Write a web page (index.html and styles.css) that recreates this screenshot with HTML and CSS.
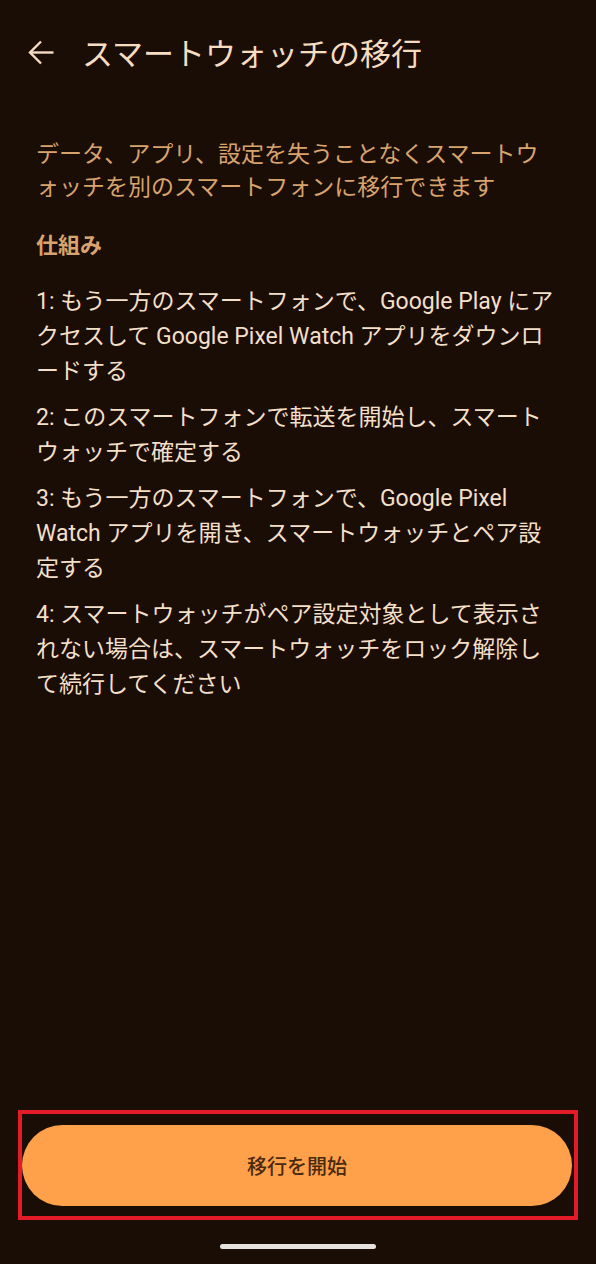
FILE: index.html
```html
<!DOCTYPE html>
<html lang="ja">
<head>
<meta charset="utf-8">
<title>スマートウォッチの移行</title>
<link rel="stylesheet" href="styles.css">
</head>
<body>
<div class="page">
  <header class="topbar">
    <span class="back">
      <svg width="26" height="26" viewBox="0 0 26 26" aria-hidden="true">
        <path d="M2.5 12.5H25.5" stroke="#f6dcc0" stroke-width="2.4" fill="none"/>
        <path d="M13 1.5L2 12.5L13 23.5" stroke="#f6dcc0" stroke-width="2.4" fill="none"/>
      </svg>
    </span>
    <h1 class="title">スマートウォッチの移行</h1>
  </header>
  <main class="content">
    <p class="desc">データ、アプリ、設定を失うことなくスマートウ<br>ォッチを別のスマートフォンに移行できます</p>
    <h2 class="heading">仕組み</h2>
    <ol class="steps">
      <li>1: もう一方のスマートフォンで、Google Play にア<br>クセスして Google Pixel Watch アプリをダウンロ<br>ードする</li>
      <li>2: このスマートフォンで転送を開始し、スマート<br>ウォッチで確定する</li>
      <li>3: もう一方のスマートフォンで、Google Pixel<br>Watch アプリを開き、スマートウォッチとペア設<br>定する</li>
      <li>4: スマートウォッチがペア設定対象として表示さ<br>れない場合は、スマートウォッチをロック解除し<br>て続行してください</li>
    </ol>
  </main>
  <footer class="footer">
    <div class="frame">
      <button class="start">移行を開始</button>
    </div>
    <div class="nav"><span class="handle"></span></div>
  </footer>
</div>
</body>
</html>
```

FILE: styles.css
```css
* { box-sizing: border-box; }
html, body {
  margin: 0;
  padding: 0;
  background: #190d05;
}
body {
  font-family: Roboto, "Noto Sans CJK JP", sans-serif;
}
.page {
  width: 596px;
  height: 1264px;
  display: flex;
  flex-direction: column;
  overflow: hidden;
}
.topbar {
  height: 104px;
  display: flex;
  align-items: center;
  padding-left: 28px;
}
.back {
  width: 26px;
  height: 26px;
  display: flex;
  margin-right: 28px;
  margin-top: 1px;
}
.title {
  margin: 0;
  font-family: "Noto Sans CJK JP", sans-serif;
  font-weight: 400;
  font-size: 31px;
  line-height: 40px;
  color: #f6dcc0;
  white-space: nowrap;
}
.content {
  flex: 1;
  padding: 32px 10px 0 36px;
}
.desc {
  margin: 0;
  font-family: "Noto Sans CJK JP", sans-serif;
  font-size: 23px;
  line-height: 33px;
  color: #d9a36d;
  white-space: nowrap;
}
.heading {
  margin: 25px 0 0;
  font-family: "Noto Sans CJK JP", sans-serif;
  font-weight: 700;
  font-size: 22px;
  line-height: 33px;
  color: #d9a36d;
}
.steps {
  list-style: none;
  margin: 24px 0 0;
  padding: 0;
  display: flex;
  flex-direction: column;
  gap: 11px;
}
.steps li {
  font-size: 23px;
  line-height: 35px;
  color: #f4dfc8;
  white-space: nowrap;
}
.footer {
  display: flex;
  flex-direction: column;
}
.frame {
  margin: 0 18px;
  border: 4px solid #e31b26;
  padding: 11px 2px 10px 0;
}
.start {
  display: block;
  width: 100%;
  height: 81px;
  border: none;
  border-radius: 41px;
  background: #ffa04b;
  color: #4a2a0e;
  font-family: "Noto Sans CJK JP", sans-serif;
  font-size: 20px;
  font-weight: 500;
  padding: 0;
}
.nav {
  height: 44px;
  padding-top: 24px;
  display: flex;
  justify-content: center;
}
.handle {
  width: 156px;
  height: 5px;
  border-radius: 3px;
  background: #e6e2df;
}
```
